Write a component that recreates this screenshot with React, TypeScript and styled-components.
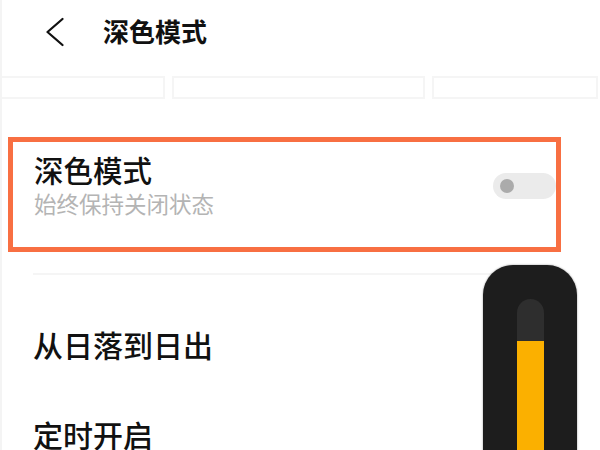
import React from 'react'
import styled, { createGlobalStyle } from 'styled-components'

const GlobalStyle = createGlobalStyle`
    html, body {
        margin: 0;
        padding: 0;
        background: #ffffff;
    }
    body {
        font-family: "Noto Sans CJK SC", "Noto Sans", sans-serif;
        color: #111111;
    }
`

type Row = {
    label: string,
}

const rows: Row[] = [
    { label: '从日落到日出' },
    { label: '定时开启' },
]

// brightness overlay level, 0..1
const level = 0.79

function BackArrow() {
    return (
        <svg width="20" height="30" viewBox="0 0 20 30" fill="none">
            <path d="M17.5 2 L2.5 15 L17.5 28" stroke="#111" strokeWidth="2.3" strokeLinecap="round" strokeLinejoin="round" />
        </svg>
    )
}

function App() {
    return (
        <Page>
            <GlobalStyle />
            <Header>
                <BackButton><BackArrow /></BackButton>
                <Title>深色模式</Title>
            </Header>

            <Preview>
                <PreviewCell $width={163} />
                <PreviewCell $width={253} />
                <PreviewCell $width={166} />
            </Preview>

            <Highlight>
                <SettingText>
                    <SettingTitle>深色模式</SettingTitle>
                    <SettingHint>始终保持关闭状态</SettingHint>
                </SettingText>
                <Toggle>
                    <Knob />
                </Toggle>
            </Highlight>

            <List>
                <Divider />
                {rows.map((row) => <ListRow key={row.label}>{row.label}</ListRow>)}
            </List>

            <Hud>
                <HudTrack>
                    <HudFill style={{ height: `${level * 100}%` }} />
                </HudTrack>
            </Hud>
        </Page>
    )
}

const Page = styled.div`
    position: relative;
    width: 600px;
    height: 450px;
    overflow: hidden;
    box-sizing: border-box;
    border-left: 2px solid #f4f4f4;
    background: #ffffff;
`

const Header = styled.div`
    display: flex;
    align-items: center;
    height: 60px;
    padding-left: 43px;
`

const BackButton = styled.div`
    display: flex;
    align-items: center;
    width: 58px;
    margin-top: 4px;
`

const Title = styled.div`
    font-size: 26px;
    font-weight: 700;
    color: #111111;
`

const Preview = styled.div`
    display: flex;
    gap: 7px;
    margin-top: 16px;
    height: 23px;
`

const PreviewCell = styled.div<{ $width: number }>`
    width: ${(p) => p.$width}px;
    flex-shrink: 0;
    box-sizing: border-box;
    border: 2px solid #f5f5f5;
    border-left-width: 0;
    &:not(:first-child) {
        border-left-width: 2px;
    }
`

const Highlight = styled.div`
    display: flex;
    justify-content: space-between;
    align-items: flex-start;
    margin: 38px 0 0 6px;
    width: 553px;
    box-sizing: border-box;
    border: 5px solid #f86f42;
    padding: 0 0 0 21px;
`

const SettingText = styled.div`
    display: flex;
    flex-direction: column;
    padding: 9px 0 28px;
`

const SettingTitle = styled.div`
    font-size: 29.5px;
    line-height: 36px;
    font-weight: 500;
    color: #111111;
`

const SettingHint = styled.div`
    margin-top: 1px;
    font-size: 22.5px;
    line-height: 31px;
    color: #b4b4b4;
`

const Toggle = styled.div`
    display: flex;
    align-items: center;
    margin-top: 31px;
    width: 63px;
    height: 26px;
    border-radius: 13px;
    background: #ebebeb;
    padding-left: 7px;
    box-sizing: border-box;
`

const Knob = styled.div`
    width: 14px;
    height: 14px;
    border-radius: 50%;
    background: #ababab;
`

const List = styled.div`
    display: flex;
    flex-direction: column;
    margin-top: 21px;
    padding-left: 31px;
`

const Divider = styled.div`
    height: 2px;
    margin-right: 30px;
    background: #f5f5f5;
    margin-bottom: 24px;
`

const ListRow = styled.div`
    display: flex;
    align-items: center;
    height: 90px;
    font-size: 30px;
    font-weight: 500;
    color: #111111;
`

const Hud = styled.div`
    position: absolute;
    left: 481px;
    top: 265px;
    width: 94px;
    height: 230px;
    border-radius: 30px;
    background: #1d1d1d;
    box-shadow: 0 0 2px rgba(0, 0, 0, 0.45);
    display: flex;
    justify-content: center;
    padding-top: 34px;
    box-sizing: border-box;
`

const HudTrack = styled.div`
    position: relative;
    width: 27px;
    height: 200px;
    border-radius: 13.5px 13.5px 0 0;
    background: #2e2e2e;
    overflow: hidden;
    display: flex;
    flex-direction: column;
    justify-content: flex-end;
`

const HudFill = styled.div`
    width: 100%;
    background: #fbb000;
`

export default App
